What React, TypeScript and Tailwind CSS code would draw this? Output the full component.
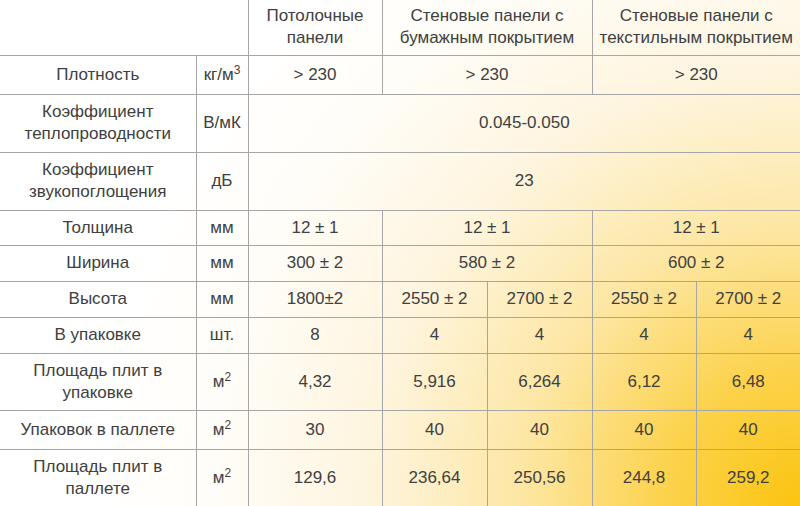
import * as React from "react";

const cell = "border border-[#a6a6a6] text-center align-middle px-0";

const rows: { label: React.ReactNode; unit: React.ReactNode; h: string; cells: { v: string; span?: number }[] }[] = [
  { label: "Плотность", unit: <>кг/м<sup className="text-[12px]">3</sup></>, h: "h-[39px]", cells: [{ v: "> 230" }, { v: "> 230", span: 2 }, { v: "> 230", span: 2 }] },
  { label: <>Коэффициент<br />теплопроводности</>, unit: "В/мК", h: "h-[58px]", cells: [{ v: "0.045-0.050", span: 5 }] },
  { label: <>Коэффициент<br />звукопоглощения</>, unit: "дБ", h: "h-[58px]", cells: [{ v: "23", span: 5 }] },
  { label: "Толщина", unit: "мм", h: "h-[35px]", cells: [{ v: "12 ± 1" }, { v: "12 ± 1", span: 2 }, { v: "12 ± 1", span: 2 }] },
  { label: "Ширина", unit: "мм", h: "h-[36px]", cells: [{ v: "300 ± 2" }, { v: "580 ± 2", span: 2 }, { v: "600 ± 2", span: 2 }] },
  { label: "Высота", unit: "мм", h: "h-[36px]", cells: [{ v: "1800±2" }, { v: "2550 ± 2" }, { v: "2700 ± 2" }, { v: "2550 ± 2" }, { v: "2700 ± 2" }] },
  { label: "В упаковке", unit: "шт.", h: "h-[36px]", cells: [{ v: "8" }, { v: "4" }, { v: "4" }, { v: "4" }, { v: "4" }] },
  { label: <>Площадь плит в<br />упаковке</>, unit: <>м<sup className="text-[12px]">2</sup></>, h: "h-[57px]", cells: [{ v: "4,32" }, { v: "5,916" }, { v: "6,264" }, { v: "6,12" }, { v: "6,48" }] },
  { label: "Упаковок в паллете", unit: <>м<sup className="text-[12px]">2</sup></>, h: "h-[39px]", cells: [{ v: "30" }, { v: "40" }, { v: "40" }, { v: "40" }, { v: "40" }] },
  { label: <>Площадь плит в<br />паллете</>, unit: <>м<sup className="text-[12px]">2</sup></>, h: "h-[58px]", cells: [{ v: "129,6" }, { v: "236,64" }, { v: "250,56" }, { v: "244,8" }, { v: "259,2" }] },
];

export default function App() {
  return (
    <div className="w-[800px] h-[506px] overflow-hidden bg-[radial-gradient(circle_at_100%_100%,#fbc410_0%,#fcd24a_14%,#fde7a6_30%,#fef5df_46%,#fffdf8_62%,#ffffff_75%)] font-['Liberation_Sans',Arial,sans-serif] text-[17px] leading-[22px] text-[#404040]">
      <table className="w-[800px] table-fixed border-collapse border-hidden">
        <colgroup>
          <col className="w-[196px]" />
          <col className="w-[52px]" />
          <col className="w-[134px]" />
          <col className="w-[105px]" />
          <col className="w-[105px]" />
          <col className="w-[104px]" />
          <col className="w-[104px]" />
        </colgroup>
        <thead>
          <tr className="h-[55px]">
            <th colSpan={2} className={cell}></th>
            <th className={`${cell} font-normal`}>Потолочные<br />панели</th>
            <th colSpan={2} className={`${cell} font-normal`}>Стеновые панели с<br />бумажным покрытием</th>
            <th colSpan={2} className={`${cell} font-normal`}>Стеновые панели с<br />текстильным покрытием</th>
          </tr>
        </thead>
        <tbody>
          {rows.map((r, i) => (
            <tr key={i} className={r.h}>
              <td className={cell}>{r.label}</td>
              <td className={cell}>{r.unit}</td>
              {r.cells.map((c, j) => (
                <td key={j} colSpan={c.span} className={cell}>{c.v}</td>
              ))}
            </tr>
          ))}
        </tbody>
      </table>
    </div>
  );
}
